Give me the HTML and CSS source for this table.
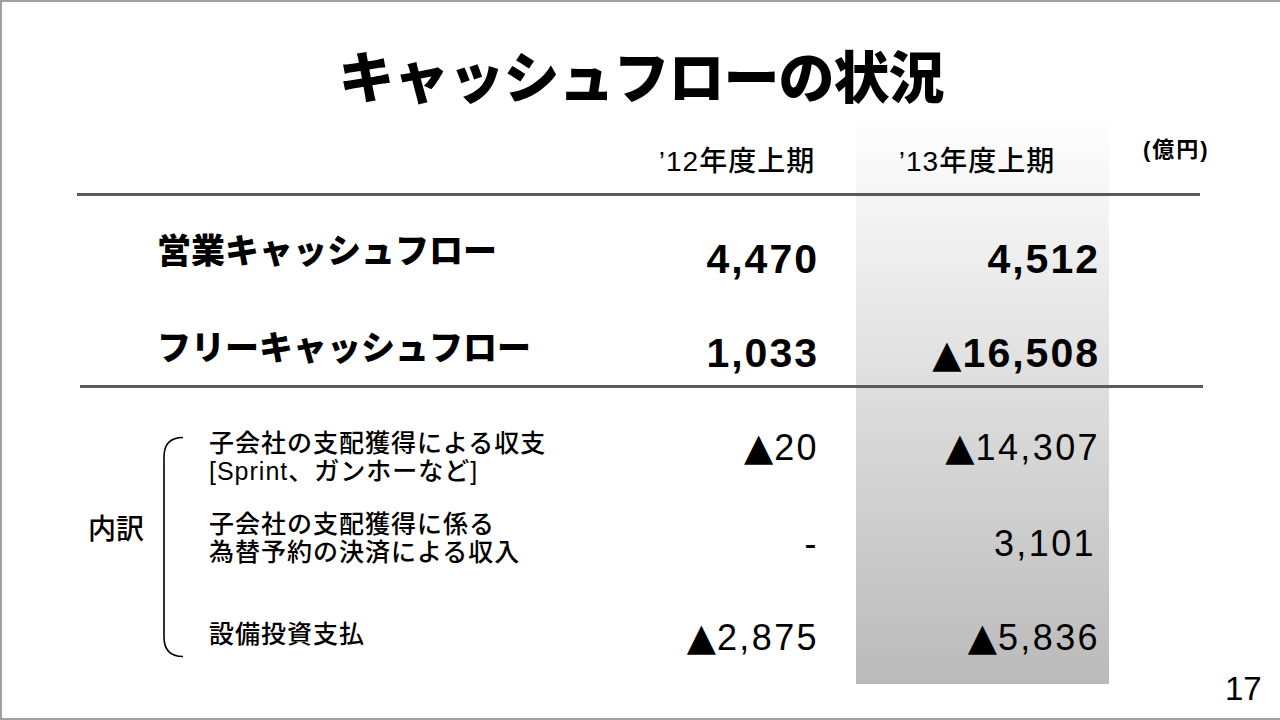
FILE: index.html
```html
<!DOCTYPE html>
<html lang="ja">
<head>
<meta charset="utf-8">
<title>キャッシュフローの状況</title>
<link rel="stylesheet" href="styles.css">
</head>
<body>
<div class="slide">
  <h1 class="title">キャッシュフローの状況</h1>
  <div class="table">
    <div class="panel"></div>

    <div class="hd col-12">’12年度上期</div>
    <div class="hd col-13">’13年度上期</div>
    <div class="unit">(億円)</div>

    <div class="rule rule-top"></div>

    <div class="label row-op">営業キャッシュフロー</div>
    <div class="num main col-12 row-op">4,470</div>
    <div class="num main col-13 row-op">4,512</div>

    <div class="label row-free">フリーキャッシュフロー</div>
    <div class="num main col-12 row-free">1,033</div>
    <div class="num main col-13 row-free"><span class="tri">▲</span>16,508</div>

    <div class="rule rule-mid"></div>

    <div class="breakdown">
      <div class="breakdown-label">内訳</div>
      <svg class="bracket" width="22" height="222" viewBox="0 0 22 222">
        <path d="M21 1.5 C9 1.5 2 8 2 21 V201 C2 214 9 220.5 21 220.5" fill="none" stroke="#000" stroke-width="1.6"/>
      </svg>
    </div>

    <div class="sub row-s1">子会社の支配獲得による収支<br>[Sprint、ガンホーなど]</div>
    <div class="num minor col-12 row-s1"><span class="tri">▲</span>20</div>
    <div class="num minor col-13 row-s1"><span class="tri">▲</span>14,307</div>

    <div class="sub row-s2">子会社の支配獲得に係る<br>為替予約の決済による収入</div>
    <div class="num minor col-12 row-s2">-</div>
    <div class="num minor col-13 row-s2 shift">3,101</div>

    <div class="sub row-s3">設備投資支払</div>
    <div class="num minor col-12 row-s3"><span class="tri">▲</span>2,875</div>
    <div class="num minor col-13 row-s3"><span class="tri">▲</span>5,836</div>

    <div class="page">17</div>
  </div>
</div>
</body>
</html>
```

FILE: styles.css
```css
html, body {
  margin: 0;
  background: #ffffff;
}

.slide {
  width: 1280px;
  height: 720px;
  box-sizing: border-box;
  border: 2px solid #a0a0a0;
  border-right: none;
  display: flex;
  flex-direction: column;
  font-family: "Liberation Sans", "Noto Sans CJK JP", sans-serif;
  color: #000000;
  overflow: hidden;
}

.title {
  margin: 44px 0 0;
  text-align: center;
  font-family: "Noto Sans CJK JP", sans-serif;
  font-weight: 900;
  font-size: 56px;
  line-height: 56px;
  letter-spacing: -1px;
}

.table {
  display: grid;
  margin: 20px 0 0 75px;
  grid-template-columns: 123px 457px 160px 39px 253px 91px 78px;
  grid-template-rows: 71px 3px 104px 85px 3px 102px 100px 94px 34px;
}

.panel {
  grid-column: 5;
  grid-row: 1 / 9;
  background: linear-gradient(#fefefe, #bababa);
}

.hd {
  grid-row: 1;
  align-self: start;
  margin-top: 25px;
  text-align: center;
  font-size: 28px;
  line-height: 30px;
  font-weight: 500;
  letter-spacing: 1px;
}

.unit {
  grid-row: 1;
  grid-column: 6 / 8;
  align-self: start;
  margin-top: 17px;
  padding-left: 34px;
  font-size: 22px;
  line-height: 22px;
  font-weight: 600;
  letter-spacing: 2px;
}

.rule {
  grid-column: 1 / 7;
  background: #5a5a5a;
}
.rule-top { grid-row: 2; }
.rule-mid { grid-row: 5; margin: 0 -3px 0 3px; }

.col-12 { grid-column: 3; }
.col-13 { grid-column: 5; padding-right: 11px; }

.label {
  grid-column: 1 / 3;
  align-self: start;
  padding-left: 80px;
  font-family: "Noto Sans CJK JP", sans-serif;
  font-weight: 900;
  font-size: 34px;
  line-height: 40px;
}
.label.row-op { grid-row: 3; margin-top: 33px; }
.label.row-free { grid-row: 4; margin-top: 26px; }

.num {
  align-self: start;
  text-align: right;
  letter-spacing: 2px;
  line-height: 40px;
  margin-right: -2px;
}
.num.main { font-weight: 700; font-size: 41px; }
.num.minor { font-weight: 400; font-size: 36px; letter-spacing: 2.4px; }
.num.shift { padding-right: 15px; }

.num.row-op { grid-row: 3; margin-top: 43px; }
.num.row-free { grid-row: 4; margin-top: 33px; }
.num.row-s1 { grid-row: 6; margin-top: 39px; }
.num.row-s2 { grid-row: 7; margin-top: 34px; }
.num.row-s3 { grid-row: 8; margin-top: 27px; }

.tri {
  font-family: "DejaVu Sans", sans-serif;
  font-weight: 400;
  font-size: 38px;
  letter-spacing: 1px;
}

.breakdown {
  grid-column: 1;
  grid-row: 6 / 9;
  display: flex;
  align-items: flex-start;
}
.breakdown-label {
  margin-top: 128px;
  padding-left: 11px;
  font-size: 28px;
  line-height: 28px;
  font-weight: 500;
  white-space: nowrap;
}
.bracket {
  margin-top: 48px;
  margin-left: 18px;
  display: block;
}

.sub {
  grid-column: 2;
  align-self: start;
  padding-left: 9px;
  font-weight: 500;
  font-size: 25px;
  line-height: 28px;
  letter-spacing: 1px;
  white-space: nowrap;
}
.sub.row-s1 { grid-row: 6; margin-top: 41px; }
.sub.row-s2 { grid-row: 7; margin-top: 20px; }
.sub.row-s3 { grid-row: 8; margin-top: 30px; }

.page {
  grid-column: 7;
  grid-row: 8 / 10;
  align-self: end;
  margin-bottom: 13px;
  padding-left: 25px;
  font-size: 33px;
  line-height: 33px;
}
```
